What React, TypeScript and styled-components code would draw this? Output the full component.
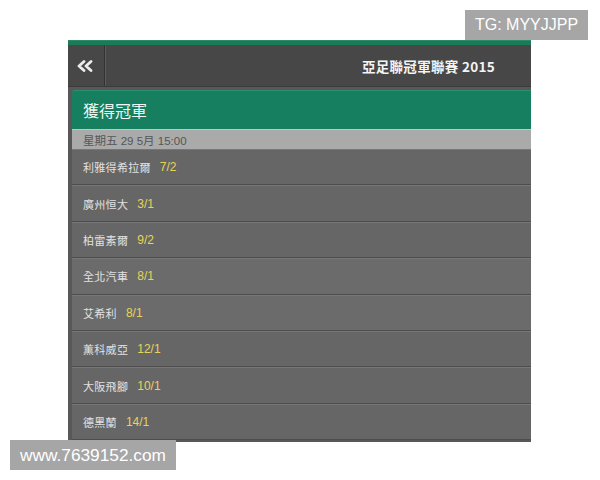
import React from "react";
import styled, { createGlobalStyle } from "styled-components";

const Global = createGlobalStyle`
  html, body { margin: 0; padding: 0; background: #ffffff; }
  body { font-family: "Liberation Sans", "Noto Sans CJK TC", sans-serif; }
`;

const Page = styled.div`
  position: relative;
  width: 600px;
  height: 480px;
  padding: 40px 0 0 68px;
  box-sizing: border-box;
  overflow: hidden;
`;

const Shot = styled.div`
  width: 463px;
  display: flex;
  flex-direction: column;
`;

const GreenStrip = styled.div`
  height: 4px;
  background: #1b7a57;
  border-top: 1px solid #2a8a66;
`;

const Header = styled.div`
  height: 41px;
  display: flex;
  align-items: stretch;
  background: #474747;
  border-bottom: 1px solid #3a3a3a;
`;

const BackButton = styled.div`
  width: 37px;
  display: flex;
  align-items: center;
  justify-content: center;
  border-right: 1px solid #333;
  box-shadow: 1px 0 0 #5a5a5a;
  padding-right: 2px;
  box-sizing: border-box;
`;

const HeaderTitle = styled.div`
  flex: 1;
  display: flex;
  align-items: center;
  justify-content: flex-end;
  padding-right: 36px;
  color: #f4f4f4;
  font-family: "Noto Sans CJK TC", sans-serif;
  font-weight: 700;
  font-size: 13.5px;
  letter-spacing: 0.3px;
`;

const Body = styled.div`
  background: #585858;
  padding: 3px 0 2px 4px;
  display: flex;
  flex-direction: column;
  border-radius: 0 0 0 3px;
`;

const TitleBar = styled.div`
  height: 39px;
  display: flex;
  align-items: center;
  padding-left: 11px;
  background: #167f5f;
  border-top: 1px solid #2b8f6f;
  border-radius: 3px 0 0 0;
  color: #eef7f2;
  font-family: "Noto Sans CJK TC", sans-serif;
  font-size: 16px;
  box-sizing: border-box;
`;

const DateBar = styled.div`
  height: 20px;
  display: flex;
  align-items: center;
  padding-left: 11px;
  background: #aaaaaa;
  border-top: 1px solid #c4c4c4;
  color: #565656;
  font-family: "Liberation Sans", "Noto Sans CJK TC", sans-serif;
  font-size: 11.5px;
  box-sizing: border-box;
`;

const Row = styled.div<{ $light?: boolean }>`
  height: 36.4px;
  display: flex;
  align-items: center;
  gap: 9px;
  padding-left: 11px;
  background: ${(p) => (p.$light ? "#6b6b6b" : "#666666")};
  border-top: 1px solid #777;
  border-bottom: 1px solid #4d4d4d;
  box-sizing: border-box;
`;

const Name = styled.span`
  color: #e2e2e2;
  font-family: "Noto Sans CJK TC", sans-serif;
  font-size: 11px;
  letter-spacing: 0.3px;
`;

const Odds = styled.span`
  color: #e6d45a;
  font-family: "Liberation Sans", sans-serif;
  font-size: 12px;
`;

const Watermark = styled.div<{ $top: number; $left: number; $size: number }>`
  position: absolute;
  top: ${(p) => p.$top}px;
  left: ${(p) => p.$left}px;
  background: #a6a6a6;
  color: #ffffff;
  font-family: "Liberation Sans", sans-serif;
  font-size: ${(p) => p.$size}px;
  height: 30px;
  padding: 0 10px;
  display: flex;
  align-items: center;
`;

const rows = [
  { name: "利雅得希拉爾", odds: "7/2" },
  { name: "廣州恒大", odds: "3/1" },
  { name: "柏雷素爾", odds: "9/2" },
  { name: "全北汽車", odds: "8/1", light: true },
  { name: "艾希利", odds: "8/1", light: true },
  { name: "薫科威亞", odds: "12/1" },
  { name: "大阪飛腳", odds: "10/1" },
  { name: "德黑蘭", odds: "14/1" },
];

function DoubleChevron() {
  return (
    <svg width="18" height="12" viewBox="0 0 18 12">
      <path
        d="M8 1.5 L3 6 L8 10.5 M15 1.5 L10 6 L15 10.5"
        fill="none"
        stroke="#ececec"
        strokeWidth="2.8"
        strokeLinecap="round"
        strokeLinejoin="round"
      />
    </svg>
  );
}

export default function App() {
  return (
    <>
      <Global />
      <Page>
        <Shot>
          <GreenStrip />
          <Header>
            <BackButton>
              <DoubleChevron />
            </BackButton>
            <HeaderTitle>亞足聯冠軍聯賽 2015</HeaderTitle>
          </Header>
          <Body>
            <TitleBar>獲得冠軍</TitleBar>
            <DateBar>星期五 29 5月 15:00</DateBar>
            {rows.map((r) => (
              <Row key={r.name} $light={r.light}>
                <Name>{r.name}</Name>
                <Odds>{r.odds}</Odds>
              </Row>
            ))}
          </Body>
        </Shot>
        <Watermark $top={10} $left={465} $size={16}>TG: MYYJJPP</Watermark>
        <Watermark $top={440} $left={10} $size={17.3}>www.7639152.com</Watermark>
      </Page>
    </>
  );
}
